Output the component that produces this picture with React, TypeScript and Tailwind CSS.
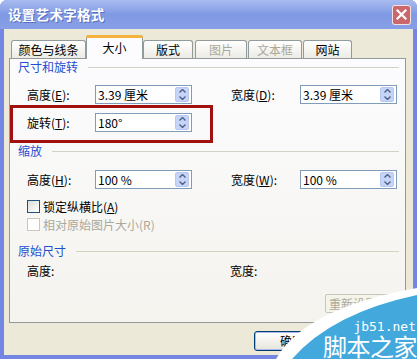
import React from "react";

const FONT = { fontFamily: '"Noto Sans CJK SC", "Liberation Sans", sans-serif' };

function Accel({ k }: { k: string }) {
  return (
    <span>
      (<span className="underline underline-offset-1">{k}</span>):
    </span>
  );
}

function SpinInput({ value, width }: { value: string; width: string }) {
  return (
    <div className={`flex h-[19px] items-stretch border border-[#7f9db9] bg-white ${width}`}>
      <div className="flex flex-1 items-center pl-[2px] text-[12px] leading-none text-black">
        {value}
      </div>
      <div className="my-[1px] mr-[2px] flex w-[14px] flex-col rounded-[2px] border border-[#b7c7ef] bg-[#c6d5f7]">
        <div className="flex flex-1 items-center justify-center">
          <svg width="7" height="4" viewBox="0 0 7 4">
            <path d="M0.5 3.5 L3.5 0.5 L6.5 3.5" fill="none" stroke="#4d6185" strokeWidth="1.4" />
          </svg>
        </div>
        <div className="flex flex-1 items-center justify-center">
          <svg width="7" height="4" viewBox="0 0 7 4">
            <path d="M0.5 0.5 L3.5 3.5 L6.5 0.5" fill="none" stroke="#4d6185" strokeWidth="1.4" />
          </svg>
        </div>
      </div>
    </div>
  );
}

function Section({ title }: { title: string }) {
  return (
    <div className="flex h-[16px] items-center pl-[8px] pr-[6px]">
      <span className="text-[12px] leading-none text-[#1e4fd0]">{title}</span>
      <div className="ml-[10px] h-px flex-1 bg-[#d4d2c4]" />
    </div>
  );
}

function FieldRow({
  left,
  leftKey,
  leftValue,
  right,
  rightKey,
  rightValue,
  className,
}: {
  left: string;
  leftKey: string;
  leftValue: string;
  right?: string;
  rightKey?: string;
  rightValue?: string;
  className: string;
}) {
  return (
    <div className={`flex h-[19px] items-center pl-[17px] ${className}`}>
      <div className="w-[68px] text-[12px] text-black">
        {left}
        <Accel k={leftKey} />
      </div>
      <SpinInput value={leftValue} width="w-[97px]" />
      {right && (
        <>
          <div className="ml-[39px] w-[69px] text-[12px] text-black">
            {right}
            <Accel k={rightKey!} />
          </div>
          <SpinInput value={rightValue!} width="w-[97px]" />
        </>
      )}
    </div>
  );
}

function Tab({ label, w, selected, disabled, className = "" }: { label: string; w: string; selected?: boolean; disabled?: boolean; className?: string }) {
  if (selected) {
    return (
      <div className={`relative z-10 -mb-px flex h-[24px] items-center justify-center rounded-t-[3px] border-x border-[#919b9c] bg-[#fcfcfe] ${w} ${className}`}>
        <div className="absolute -left-px -right-px top-0 h-[3px] rounded-t-[3px] bg-[#f3b33e]" />
        <span className="mt-[2px] text-[12px] text-black">{label}</span>
      </div>
    );
  }
  return (
    <div
      className={`flex h-[18px] items-center justify-center rounded-t-[3px] border border-b-0 border-[#919b9c] bg-gradient-to-b from-white to-[#ecebe5] ${w} ${className}`}
    >
      <span className={`text-[12px] ${disabled ? "text-[#aca899]" : "text-black"}`}>{label}</span>
    </div>
  );
}

function Checkbox({ label, disabled, className }: { label: React.ReactNode; disabled?: boolean; className: string }) {
  return (
    <div className={`flex h-[13px] items-center pl-[17px] ${className}`}>
      <div
        className={`h-[13px] w-[13px] border ${
          disabled ? "border-[#cac8bb] bg-white" : "border-[#1c5180] bg-gradient-to-br from-[#dcdcd7] to-white"
        }`}
      />
      <span className={`ml-[3px] text-[12px] leading-none ${disabled ? "text-[#aca899]" : "text-black"}`}>{label}</span>
    </div>
  );
}

export default function App() {
  return (
    <div className="relative h-[359px] w-[417px] overflow-hidden bg-white" style={FONT}>
      <div className="flex h-full w-full flex-col rounded-t-[7px] bg-[#7386e2]">
        {/* Title bar */}
        <div className="flex h-[29px] items-center rounded-t-[7px] bg-gradient-to-b from-[#a9bbf0] via-[#8099e3] to-[#869fe6] pl-[8px] pr-[6px]">
          <span className="text-[13.5px] font-bold tracking-[0.3px] text-white [text-shadow:1px_1px_0_#5a6fc0]">
            设置艺术字格式
          </span>
          <div className="ml-auto flex h-[20px] w-[19px] items-center justify-center rounded-[3px] border border-white/80 bg-[#c9676b]">
            <svg width="11" height="11" viewBox="0 0 11 11">
              <path d="M1.5 1.5 L9.5 9.5 M9.5 1.5 L1.5 9.5" stroke="white" strokeWidth="2.2" strokeLinecap="square" />
            </svg>
          </div>
        </div>

        {/* Body */}
        <div className="mx-[4px] mb-[4px] flex flex-1 flex-col bg-[#ece9d8]">
          {/* Tabs */}
          <div className="ml-[7px] mt-[5px] flex h-[24px] items-end">
            <Tab label="颜色与线条" w="w-[75px]" />
            <Tab label="大小" w="w-[57px]" selected />
            <Tab label="版式" w="w-[50px]" />
            <Tab label="图片" w="w-[52px]" disabled className="ml-[2px]" />
            <Tab label="文本框" w="w-[54px]" disabled className="ml-[1px]" />
            <Tab label="网站" w="w-[49px]" className="ml-[1px]" />
          </div>

          {/* Panel */}
          <div className="ml-[5px] flex h-[265px] w-[397px] flex-col border border-[#919b9c] bg-gradient-to-b from-[#fcfcfe] to-[#f4f3ee]">
            <Section title="尺寸和旋转" />
            <FieldRow className="mt-[10px]" left="高度" leftKey="E" leftValue="3.39 厘米" right="宽度" rightKey="D" rightValue="3.39 厘米" />
            <FieldRow className="mt-[9px]" left="旋转" leftKey="T" leftValue="180°" />
            <div className="mt-[11px]">
              <Section title="缩放" />
            </div>
            <FieldRow className="mt-[11px]" left="高度" leftKey="H" leftValue="100 %" right="宽度" rightKey="W" rightValue="100 %" />
            <Checkbox
              className="mt-[11px]"
              label={
                <>
                  锁定纵横比(<span className="underline">A</span>)
                </>
              }
            />
            <Checkbox className="mt-[5px]" disabled label="相对原始图片大小(R)" />
            <div className="mt-[12px]">
              <Section title="原始尺寸" />
            </div>
            <div className="mt-[5px] flex h-[14px] items-center pl-[17px] text-[12px] text-black">
              <div className="w-[203px]">高度:</div>
              <div>宽度:</div>
            </div>
            <div className="mr-[14px] mt-[16px] flex justify-end">
              <div className="flex h-[19px] w-[66px] items-center rounded-[2px] border border-[#c9c7ba] bg-[#f5f4ea] pl-[3px] text-[12px] text-[#aca899]">
                重新设置
              </div>
            </div>
          </div>

          {/* Buttons */}
          <div className="ml-[250px] mt-[8px] flex gap-[7px]">
            <div className="flex h-[20px] w-[76px] items-center justify-center rounded-[3px] border border-[#003c74] bg-gradient-to-b from-white to-[#e6e5dd] text-[12px] text-black shadow-[inset_0_0_0_1px_#a9bce8]">
              确定
            </div>
            <div className="flex h-[20px] w-[76px] items-center justify-center rounded-[3px] border border-[#003c74] bg-gradient-to-b from-white to-[#e6e5dd] text-[12px] text-black">
              取消
            </div>
          </div>
        </div>
      </div>

      {/* Annotation rectangle */}
      <div className="pointer-events-none absolute left-[10px] top-[105px] h-[38px] w-[203px] border-[3px] border-[#a11111]" />

      {/* Watermark */}
      <svg className="pointer-events-none absolute left-0 top-0" width="417" height="359" viewBox="0 0 417 359">
        <path d="M276 359 Q305 308 417 288 L417 359 Z" fill="white" />
        <path d="M292 359 Q332 313 417 295 L417 359 Z" fill="#43a9dd" />
      </svg>
      <div
        className="pointer-events-none absolute right-[1px] top-[320px] text-[13px] leading-none text-white"
        style={{ fontFamily: '"DejaVu Sans Mono", monospace' }}
      >
        jb51.net
      </div>
      <div className="pointer-events-none absolute right-[0px] top-[334px] text-[24px] leading-none tracking-[-0.5px] text-white">
        脚本之家
      </div>
    </div>
  );
}
